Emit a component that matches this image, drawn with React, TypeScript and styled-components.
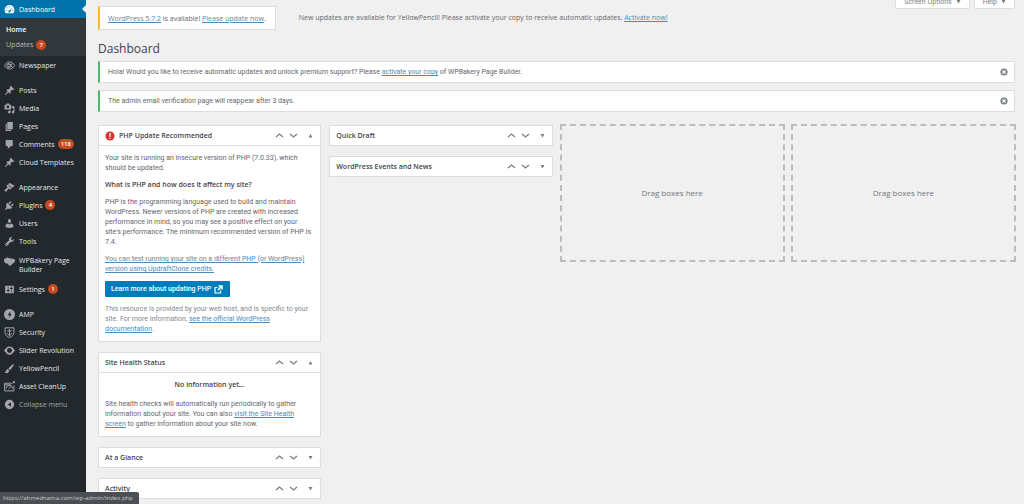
import React from "react";
import styled, { createGlobalStyle, css } from "styled-components";

const bodyFont = `Roboto, "Noto Sans", sans-serif`;

const Global = createGlobalStyle`
  *, *::before, *::after { box-sizing: border-box; }
  html, body { margin: 0; padding: 0; background: #f0f0f1; }
  body {
    font-family: "Open Sans", "Noto Sans", sans-serif;
    font-size: 7px;
    line-height: 10px;
    color: #63676c;
  }
  h1, h2, h3, p, ul { margin: 0; padding: 0; }
  ul { list-style: none; }
  button { font: inherit; color: inherit; border: 0; padding: 0; background: none; cursor: pointer; }
`;

const Shell = styled.div`
  display: flex;
  min-height: 100vh;
`;

/* ---------- sidebar ---------- */

const Sidebar = styled.nav`
  flex: 0 0 86px;
  background: #23282d;
  color: #e4e5e6;
`;

const MenuGroup = styled.ul`
  display: flex;
  flex-direction: column;
  & + & { margin-top: 7px; }
`;

const MenuLink = styled.a<{ $active?: boolean; $muted?: boolean; $tall?: boolean }>`
  display: flex;
  align-items: center;
  min-height: 18px;
  padding: 0 4px;
  gap: 4px;
  font-weight: 500;
  line-height: 9px;
  color: inherit;
  text-decoration: none;
  position: relative;
  svg { flex: none; color: #a0a5aa; }
  ${(p) =>
    p.$tall &&
    css`
      align-items: flex-start;
      min-height: 30px;
      padding-top: 6px;
    `}
  ${(p) =>
    p.$active &&
    css`
      background: #0073aa;
      color: #fff;
      svg { color: #fff; }
      &::after {
        content: "";
        position: absolute;
        right: 0;
        top: 5px;
        border: 4px solid transparent;
        border-left: 0;
        border-right-color: #f0f0f1;
      }
    `}
  ${(p) =>
    p.$muted &&
    css`
      font-weight: 400;
      color: #a0a5aa;
    `}
`;

const MenuText = styled.span`
  display: flex;
  align-items: center;
  gap: 3px;
`;

const Submenu = styled.ul`
  background: #32373c;
  padding: 4px 0 4px 6px;
`;

const SubLink = styled.a<{ $current?: boolean }>`
  display: flex;
  align-items: center;
  gap: 3px;
  height: 15px;
  color: ${(p) => (p.$current ? "#fff" : "#b4b9be")};
  font-weight: ${(p) => (p.$current ? 600 : 400)};
  text-decoration: none;
`;

const Count = styled.span`
  min-width: 10px;
  height: 10px;
  padding: 0 3px;
  border-radius: 5px;
  background: #ca4a1f;
  color: #fff;
  font-size: 6px;
  line-height: 10px;
  font-weight: 600;
  text-align: center;
`;

/* ---------- main area ---------- */

const Main = styled.main`
  position: relative;
  flex: 1;
  min-width: 0;
  padding: 6px 9px 5px 12px;
  overflow: hidden;
`;

const ScreenMeta = styled.div`
  position: absolute;
  top: -6px;
  right: 9px;
  display: flex;
  gap: 4px;
`;

const MetaButton = styled.button`
  display: flex;
  align-items: center;
  gap: 4px;
  height: 15px;
  padding: 0 8px;
  border: 1px solid #dcdde0;
  border-radius: 0 0 2px 2px;
  background: #fff;
  color: #7d8186;
  font-family: ${bodyFont};
`;

const TopRow = styled.div`
  display: flex;
  align-items: center;
  gap: 23px;
`;

const Link = styled.a`
  color: #4a8bbb;
  text-decoration: underline;
`;

const Nag = styled.div`
  padding: 6px 9px 5px 8px;
  border: 1px solid #dcdde0;
  border-left: 2px solid #ffb92e;
  background: #fff;
  line-height: 11px;
`;

const Title = styled.h1`
  margin: 10px 0 3px;
  font-size: 12px;
  line-height: 18px;
  font-weight: 400;
  color: #3c4248;
`;

const Notice = styled.div`
  display: flex;
  align-items: center;
  justify-content: space-between;
  height: 22px;
  padding: 0 6px 0 8px;
  border: 1px solid #dcdde0;
  border-left: 2px solid #4ab866;
  background: #fff;
  font-family: ${bodyFont};
  & + & { margin-top: 7px; }
`;

const IconButton = styled.button`
  display: flex;
  align-items: center;
  justify-content: center;
  width: 9px;
  height: 9px;
  color: #7b8086;
`;

const Columns = styled.div`
  display: grid;
  grid-template-columns: repeat(4, minmax(0, 1fr));
  align-items: start;
  gap: 8px;
  margin-top: 12px;
`;

const Column = styled.div`
  display: flex;
  flex-direction: column;
  gap: 10px;
  padding-top: 1px;
`;

const Box = styled.section`
  border: 1px solid #dcdde0;
  background: #fff;
`;

const BoxHeader = styled.header<{ $open?: boolean }>`
  display: flex;
  align-items: center;
  height: ${(p) => (p.$open ? "20px" : "19px")};
  padding: 0 5px 0 6px;
  border-bottom: ${(p) => (p.$open ? "1px solid #dcdde0" : "0")};
`;

const BoxTitle = styled.h2`
  display: flex;
  align-items: center;
  gap: 4px;
  flex: 1;
  font-size: 7px;
  line-height: 10px;
  font-weight: 600;
  color: #3f454b;
`;

const Handles = styled.div`
  display: flex;
  align-items: center;
  gap: 5px;
  button:last-child { margin-left: 3px; }
`;

const BoxBody = styled.div`
  display: flex;
  flex-direction: column;
  align-items: flex-start;
  gap: 7px;
  padding: 7px 6px;
`;

const Subhead = styled.h3`
  font-size: 7px;
  line-height: 10px;
  font-weight: 600;
  color: #3f454b;
`;

const CenterHead = styled(Subhead)`
  align-self: center;
  margin-bottom: 2px;
`;

const Para = styled.p<{ $light?: boolean }>`
  font-family: ${bodyFont};
  color: ${(p) => (p.$light ? "#85898d" : "inherit")};
`;

const Primary = styled.a`
  display: flex;
  align-items: center;
  gap: 3px;
  height: 16px;
  padding: 0 7px 0 6px;
  border-radius: 1px;
  background: #007cba;
  color: #fff;
  font-family: ${bodyFont};
  font-weight: 500;
  text-decoration: none;
`;

const DropZone = styled.div`
  display: flex;
  align-items: center;
  justify-content: center;
  height: 138px;
  margin: 0 -1px;
  border: 2px dashed #b9bdc2;
  font-size: 8px;
  color: #72777c;
`;

const StatusBar = styled.div`
  position: fixed;
  left: 0;
  bottom: 0;
  height: 12px;
  padding: 0 6px 0 3px;
  border-radius: 0 2px 0 0;
  background: #4b4f54;
  color: #c8cacc;
  font-size: 6px;
  line-height: 12px;
`;

/* ---------- icons ---------- */

const paths = {
  pin: "M10.44 3.02l1.82-1.82 6.36 6.35-1.83 1.82c-1.05-.68-2.48-.57-3.41.36l-.75.75c-.92.93-1.04 2.35-.35 3.41l-1.83 1.82-2.41-2.41-2.8 2.79c-.42.42-3.38 2.71-3.8 2.29s1.86-3.39 2.28-3.81l2.79-2.79L4.1 9.36l1.83-1.82c1.05.69 2.48.57 3.4-.36l.75-.75c.93-.92 1.05-2.35.36-3.41z",
  gauge: "M10 2a9 9 0 0 0-9 9c0 2.300.8 4.400 2.200 6h13.600c1.400-1.600 2.200-3.700 2.200-6a9 9 0 0 0-9-9zm0 2a1 1 0 1 1 0 2 1 1 0 0 1 0-2zM5.500 6a1 1 0 1 1 0 2 1 1 0 0 1 0-2zm9.600.300l-3.300 6.500a2 2 0 1 1-1.700-1.200zM3.800 10.500a1 1 0 1 1 0 2 1 1 0 0 1 0-2zm12.400 0a1 1 0 1 1 0 2 1 1 0 0 1 0-2z",
  media: "M13 11V4c0-.55-.45-1-1-1h-1.67L9 1H5L3.67 3H2c-.55 0-1 .45-1 1v7c0 .55.45 1 1 1h10c.55 0 1-.45 1-1zM7 4.500c1.380 0 2.500 1.120 2.500 2.500S8.380 9.500 7 9.500 4.500 8.380 4.500 7 5.620 4.500 7 4.500zM14 6h5v10.500c0 1.380-1.120 2.500-2.500 2.500S14 17.880 14 16.500s1.120-2.500 2.500-2.500c.17 0 .34.02.5.05V9h-3V6zm-4 8.050V13h2v3.500c0 1.380-1.120 2.500-2.500 2.500S7 17.880 7 16.500 8.120 14 9.500 14c.17 0 .34.02.5.05z",
  page: "M6 15V2h10v13H6zm-1 1h8v2H3V5h2v11z",
  comment: "M5 2h9c1.100 0 2 .9 2 2v7c0 1.100-.9 2-2 2h-2l-5 5v-5H5c-1.100 0-2-.9-2-2V4c0-1.100.9-2 2-2z",
  appearance: "M14.480 11.060L7.410 3.990l1.500-1.500c.5-.56 2.300-.47 3.510.32 1.210.8 1.430 1.280 2.910 2.100 1.180.64 2.450 1.260 4.450.85zm-.71.71L6.700 4.700 4.930 6.470c-.39.39-.39 1.020 0 1.410l1.060 1.060c.39.39.39 1.030 0 1.420-.6.6-1.430 1.110-2.210 1.690-.35.26-.7.53-1.010.84C1.430 14.230.4 16.080 1.400 17.070c.99 1 2.840-.03 4.180-1.360.31-.31.58-.66.85-1.020.57-.78 1.080-1.610 1.690-2.210.39-.39 1.020-.39 1.410 0l1.060 1.060c.39.39 1.020.39 1.410 0z",
  plug: "M13.110 4.360L9.870 7.600 8 5.730l3.240-3.240c.35-.34 1.050-.2 1.560.32.52.51.66 1.210.31 1.550zm-8 1.770l.91-1.120 9.010 9.010-1.190.84c-.71.71-2.630 1.160-3.820 1.160H6.140L4.900 17.260c-.59.59-1.540.59-2.120 0-.59-.58-.59-1.530 0-2.120l1.240-1.240v-3.880c0-1.130.4-3.190 1.090-3.890zm7.260 3.970l3.240-3.240c.34-.35 1.040-.21 1.550.31.52.51.66 1.210.31 1.550l-3.240 3.250z",
  user: "M10 9.250c-2.270 0-2.730-3.440-2.730-3.440C7 4.020 7.820 2 9.970 2c2.160 0 2.980 2.020 2.710 3.810 0 0-.41 3.440-2.680 3.440zm0 2.570L12.720 10c2.390 0 4.520 2.330 4.520 4.530v2.490s-3.650 1.130-7.240 1.130c-3.650 0-7.240-1.130-7.240-1.130v-2.490c0-2.250 1.940-4.480 4.470-4.480z",
  wrench: "M16.680 9.770c-1.340 1.340-3.300 1.670-4.950.99l-5.410 6.520c-.99.99-2.590.99-3.580 0s-.99-2.590 0-3.570l6.520-5.420c-.68-1.650-.35-3.610.99-4.950 1.280-1.280 3.120-1.620 4.720-1.060l-2.890 2.890 2.820 2.820 2.860-2.870c.53 1.580.18 3.390-1.080 4.650zM3.810 16.210c.4.39 1.040.39 1.430 0 .4-.4.4-1.040 0-1.430-.39-.4-1.030-.4-1.430 0-.39.39-.39 1.030 0 1.430z",
  bakery: "M0 8c0-3 2-4.500 4-4 1-1.500 3.500-1.500 4.500 0 1.500-1 3.500-.5 4 .8C17 4 20.500 6 20 9s-2.500 4-4 4c-1 3-3.500 4.500-6 4.500-1.500 0-2-2-2.500-3.500C3.500 14 0 12 0 8z",
  settings: "M18 16V4c0-.55-.45-1-1-1H3c-.55 0-1 .45-1 1v12c0 .55.45 1 1 1h14c.55 0 1-.45 1-1zM8 11h1c.55 0 1 .45 1 1s-.45 1-1 1H8v1.500c0 .28-.22.5-.5.5s-.5-.22-.5-.5V13H6c-.55 0-1-.45-1-1s.45-1 1-1h1V5.500c0-.28.22-.5.5-.5s.5.22.5.5V11zm5-2h-1c-.55 0-1-.45-1-1s.45-1 1-1h1V5.500c0-.28.22-.5.5-.5s.5.22.5.5V7h1c.55 0 1 .45 1 1s-.45 1-1 1h-1v5.500c0 .28-.22.5-.5.5s-.5-.22-.5-.5V9z",
  amp: "M10 0a10 10 0 1 0 0 20 10 10 0 0 0 0-20zm2 3.500l-1 5h3l-5 8.500 1-5.500H6.500z",
  brush: "M18.500 1.500c-3 .8-8.500 5.500-10.500 9l2.500 2.500c3.500-2.500 7.500-8 8-11.500zM7 11.500c-2 0-3.300 1.200-3.500 3C3.300 16 2.500 17 1 17.500c3.500 1.500 8 .5 8.500-3.500z",
  collapse: "M10 1.500a8.500 8.500 0 1 0 0 17 8.500 8.500 0 0 0 0-17zm2.500 4.500v8L7 10z",
  dismiss: "M10 1a9 9 0 1 0 0 18 9 9 0 0 0 0-18zm5 12l-2 2-3-3-3 3-2-2 3-3-3-3 2-2 3 3 3-3 2 2-3 3z",
};

const lineArt: Record<string, React.ReactNode> = {
  eye: (
    <g fill="none" stroke="currentColor" strokeWidth="1.800">
      <path d="M0 10l5-5c3-2 7-2 10 0l5 5-5 5c-3 2-7 2-10 0z" />
      <path d="M4 10l4-4 8 8M4 10l4 4 8-8" />
      <circle cx="10" cy="10" r="3" />
    </g>
  ),
  shield: (
    <g fill="none" stroke="currentColor" strokeWidth="1.800">
      <path d="M2 1.500h16v9c0 4-3.500 7-8 8.500-4.500-1.500-8-4.500-8-8.500z" />
      <path d="M10 4v12M6 7h8M6 11c0 2 2 3.500 4 3.500s4-1.500 4-3.500" />
    </g>
  ),
  slider: (
    <g stroke="none">
      <path fillRule="evenodd" d="M10 2.500a7.500 7.500 0 1 0 0 15 7.500 7.500 0 0 0 0-15zm0 3a4.500 4.500 0 1 1 0 9 4.500 4.500 0 0 1 0-9z" />
      <path d="M4 5.500v9L0 10zM16 5.500v9l4-4.500z" />
    </g>
  ),
  asset: (
    <g fill="none" stroke="currentColor" strokeWidth="1.800">
      <path d="M14 4H1v14h17V8" />
      <path d="M3.500 14a6 6 0 0 1 12 0M9 14l3-4M1 7h12M15 5l4-4M16 1h3v3" />
    </g>
  ),
};

type IconName = string;

const Icon = ({ name, size = 11 }: { name: IconName; size?: number }) => (
  <svg width={size} height={size} viewBox="0 0 20 20" fill="currentColor" aria-hidden="true">
    {lineArt[name] ?? <path fillRule="evenodd" d={paths[name as keyof typeof paths]} />}
  </svg>
);

const Chevron = ({ down }: { down?: boolean }) => (
  <svg width="9" height="9" viewBox="0 0 9 9" fill="none" stroke="currentColor" strokeWidth="1.300" aria-hidden="true">
    <path d={down ? "M1 3l3.500 3L8 3" : "M1 6l3.500-3L8 6"} />
  </svg>
);

const Triangle = ({ down }: { down?: boolean }) => (
  <svg width="5" height="5" viewBox="0 0 5 5" fill="currentColor" aria-hidden="true">
    <path d={down ? "M.5 1h4L2.500 4.500z" : "M.5 4.500h4L2.500 1z"} />
  </svg>
);

const ExternalIcon = () => (
  <svg width="9" height="9" viewBox="0 0 18 18" fill="none" stroke="currentColor" strokeWidth="2.400" aria-hidden="true">
    <path d="M7 5H2v11h11v-5" />
    <path d="M9 2h7v7M15.500 2.500L8 10" strokeWidth="3.200" />
  </svg>
);

const AlertIcon = () => (
  <svg width="10" height="10" viewBox="0 0 20 20" aria-hidden="true">
    <circle cx="10" cy="10" r="9" fill="#dc3232" />
    <path d="M8.500 4h3l-.5 8H9zM8.700 13.500h2.600V16H8.700z" fill="#fff" />
  </svg>
);

/* ---------- pieces ---------- */

type Item = { icon: IconName; label: string; secondLine?: string; count?: number };

const groups: Item[][] = [
  [
    { icon: "pin", label: "Posts" },
    { icon: "media", label: "Media" },
    { icon: "page", label: "Pages" },
    { icon: "comment", label: "Comments", count: 118 },
    { icon: "pin", label: "Cloud Templates" },
  ],
  [
    { icon: "appearance", label: "Appearance" },
    { icon: "plug", label: "Plugins", count: 4 },
    { icon: "user", label: "Users" },
    { icon: "wrench", label: "Tools" },
    { icon: "bakery", label: "WPBakery Page", secondLine: "Builder" },
    { icon: "settings", label: "Settings", count: 1 },
  ],
  [
    { icon: "amp", label: "AMP" },
    { icon: "shield", label: "Security" },
    { icon: "slider", label: "Slider Revolution" },
    { icon: "brush", label: "YellowPencil" },
    { icon: "asset", label: "Asset CleanUp" },
  ],
];

const MenuItem = ({ icon, label, secondLine, count }: Item) => (
  <li>
    <MenuLink href="#" $tall={!!secondLine}>
      <Icon name={icon} />
      <MenuText>
        {secondLine ? <span>{label}<br />{secondLine}</span> : label}
        {count !== undefined && <Count>{count}</Count>}
      </MenuText>
    </MenuLink>
  </li>
);

const Panel = ({ title, alert, children }: { title: string; alert?: boolean; children?: React.ReactNode }) => (
  <Box>
    <BoxHeader $open={!!children}>
      <BoxTitle>
        {alert && <AlertIcon />}
        {title}
      </BoxTitle>
      <Handles>
        <IconButton aria-label="Move up"><Chevron /></IconButton>
        <IconButton aria-label="Move down"><Chevron down /></IconButton>
        <IconButton aria-label="Toggle panel"><Triangle down={!children} /></IconButton>
      </Handles>
    </BoxHeader>
    {children && <BoxBody>{children}</BoxBody>}
  </Box>
);

export default function App() {
  return (
    <>
      <Global />
      <Shell>
        <Sidebar>
          <MenuGroup>
            <li>
              <MenuLink href="#" $active><Icon name="gauge" />Dashboard</MenuLink>
              <Submenu>
                <li><SubLink href="#" $current>Home</SubLink></li>
                <li><SubLink href="#">Updates <Count>7</Count></SubLink></li>
              </Submenu>
            </li>
            <MenuItem icon="eye" label="Newspaper" />
          </MenuGroup>
          {groups.map((items, i) => (
            <MenuGroup key={i}>
              {items.map((item) => <MenuItem key={item.label} {...item} />)}
              {i === groups.length - 1 && (
                <li><MenuLink as="button" $muted><Icon name="collapse" />Collapse menu</MenuLink></li>
              )}
            </MenuGroup>
          ))}
        </Sidebar>

        <Main>
          <ScreenMeta>
            <MetaButton>Screen Options <Triangle down /></MetaButton>
            <MetaButton>Help <Triangle down /></MetaButton>
          </ScreenMeta>
          <TopRow>
            <Nag>
              <Link href="#">WordPress 5.7.2</Link> is available! <Link href="#">Please update now</Link>.
            </Nag>
            <p>
              New updates are available for YellowPencil! Please activate your copy to receive automatic updates.{" "}
              <Link href="#">Activate now!</Link>
            </p>
          </TopRow>
          <Title>Dashboard</Title>
          <Notice>
            <p>
              Hola! Would you like to receive automatic updates and unlock premium support? Please{" "}
              <Link href="#">activate your copy</Link> of WPBakery Page Builder.
            </p>
            <IconButton aria-label="Dismiss"><Icon name="dismiss" size={8} /></IconButton>
          </Notice>
          <Notice>
            <p>The admin email verification page will reappear after 3 days.</p>
            <IconButton aria-label="Dismiss"><Icon name="dismiss" size={8} /></IconButton>
          </Notice>

          <Columns>
            <Column>
              <Panel title="PHP Update Recommended" alert>
                <Para>Your site is running an insecure version of PHP (7.0.33), which should be updated.</Para>
                <Subhead>What is PHP and how does it affect my site?</Subhead>
                <Para>
                  PHP is the programming language used to build and maintain WordPress. Newer versions of PHP are
                  created with increased performance in mind, so you may see a positive effect on your site's
                  performance. The minimum recommended version of PHP is 7.4.
                </Para>
                <Para>
                  <Link href="#">You can test running your site on a different PHP (or WordPress) version using UpdraftClone credits.</Link>
                </Para>
                <Primary href="#">Learn more about updating PHP <ExternalIcon /></Primary>
                <Para $light>
                  This resource is provided by your web host, and is specific to your site. For more information,{" "}
                  <Link href="#">see the official WordPress documentation</Link>.
                </Para>
              </Panel>
              <Panel title="Site Health Status">
                <CenterHead>No information yet…</CenterHead>
                <Para>
                  Site health checks will automatically run periodically to gather information about your site. You
                  can also <Link href="#">visit the Site Health screen</Link> to gather information about your site now.
                </Para>
              </Panel>
              <Panel title="At a Glance" />
              <Panel title="Activity" />
            </Column>
            <Column>
              <Panel title="Quick Draft" />
              <Panel title="WordPress Events and News" />
            </Column>
            <DropZone>Drag boxes here</DropZone>
            <DropZone>Drag boxes here</DropZone>
          </Columns>
        </Main>
      </Shell>
      <StatusBar>https://ahmednama.com/wp-admin/index.php</StatusBar>
    </>
  );
}
